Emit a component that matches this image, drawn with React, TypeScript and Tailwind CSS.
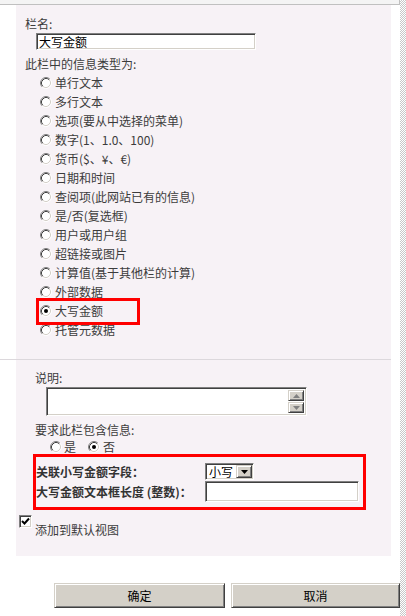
import React from "react";

const types = [
  "单行文本",
  "多行文本",
  "选项(要从中选择的菜单)",
  "数字(1、1.0、100)",
  "货币($、¥、€)",
  "日期和时间",
  "查阅项(此网站已有的信息)",
  "是/否(复选框)",
  "用户或用户组",
  "超链接或图片",
  "计算值(基于其他栏的计算)",
  "外部数据",
  "大写金额",
  "托管元数据",
];

const Radio = ({ checked = false }: { checked?: boolean }) => (
  <svg width="12" height="12" viewBox="0 0 12 12" className="shrink-0">
    <circle cx="6" cy="6" r="4.5" fill="#ffffff" />
    <path d="M2.11 9.89 A5.5 5.5 0 0 1 9.89 2.11" fill="none" stroke="#808080" strokeWidth="1" />
    <path d="M9.89 2.11 A5.5 5.5 0 0 1 2.11 9.89" fill="none" stroke="#ffffff" strokeWidth="1" />
    <path d="M2.82 9.18 A4.5 4.5 0 0 1 9.18 2.82" fill="none" stroke="#404040" strokeWidth="1" />
    <path d="M9.18 2.82 A4.5 4.5 0 0 1 2.82 9.18" fill="none" stroke="#d4d0c8" strokeWidth="1" />
    {checked && <circle cx="6" cy="6" r="2" fill="#000000" />}
  </svg>
);

const sunken =
  "bg-white border border-t-[#808080] border-l-[#808080] border-b-white border-r-white shadow-[inset_1px_1px_#404040,inset_-1px_-1px_#d4d0c8]";

const raised =
  "bg-[#d4d0c8] border border-t-[#d4d0c8] border-l-[#d4d0c8] border-b-[#404040] border-r-[#404040] shadow-[inset_1px_1px_#ffffff,inset_-1px_-1px_#808080]";

const Arrow = ({ up = false, color = "#000" }: { up?: boolean; color?: string }) => (
  <svg width="7" height="4" viewBox="0 0 7 4">
    <path d={up ? "M3.5 0 L7 4 L0 4 Z" : "M0 0 L7 0 L3.5 4 Z"} fill={color} />
  </svg>
);

export default function App() {
  return (
    <div className="flex w-[406px] h-[616px] bg-white text-[12px] text-[#3c3c3c] font-['Noto_Sans_CJK_SC',sans-serif] overflow-hidden">
      <div className="w-[400px] flex flex-col">
        <div className="h-[5px] bg-[#f4f4f4] border-b border-r border-[#c0c0c0]" />

        {/* 栏名与类型 */}
        <div className="flex">
          <div className="w-[16px]" />
          <div className="w-[375px] h-[354px] bg-[#f7f2f6] pt-[9px]">
            <div className="h-[19px] flex items-center pl-[9px]">栏名:</div>
            <div className={`ml-[20px] w-[220px] h-[17px] flex items-center pl-[2px] text-black ${sunken}`}>
              大写金额
            </div>
            <div className="mt-[4px] h-[19px] flex items-center pl-[9px]">此栏中的信息类型为:</div>
            {types.map((t, i) => (
              <div key={t} className="relative h-[19px] flex items-center pl-[24px] gap-[3px]">
                <Radio checked={i === 12} />
                <span>{t}</span>
                {i === 12 && (
                  <div className="absolute z-10 left-[20px] top-[-3px] w-[104px] h-[27px] border-[3px] border-[#ff0000]" />
                )}
              </div>
            ))}
          </div>
        </div>

        <div className="h-px w-[391px] bg-[#dcd8dc]" />

        {/* 说明与设置 */}
        <div className="flex">
          <div className="w-[16px]" />
          <div className="w-[375px] h-[196px] bg-[#f7f2f6] pt-[9px]">
            <div className="h-[18px] flex items-center pl-[19px]">说明:</div>
            <div className={`ml-[30px] w-[261px] h-[29px] flex justify-end p-[2px] ${sunken}`}>
              <div className="w-[16px] flex flex-col gap-px">
                <div className={`h-[12px] flex items-center justify-center ${raised}`}>
                  <Arrow up color="#808080" />
                </div>
                <div className={`h-[12px] flex items-center justify-center ${raised}`}>
                  <Arrow color="#808080" />
                </div>
              </div>
            </div>
            <div className="mt-[4px] h-[19px] flex items-center pl-[19px]">要求此栏包含信息:</div>
            <div className="h-[15px] flex items-center pl-[34px]">
              <Radio />
              <span className="ml-[2px]">是</span>
              <span className="ml-[12px]">
                <Radio checked />
              </span>
              <span className="ml-[3px]">否</span>
            </div>

            <div className="ml-[17px] w-[333px] h-[56px] border-[3px] border-[#ff0000] pt-[6px] font-bold text-[#333]">
              <div className="h-[17px] flex items-center">
                <span className="w-[169px]">关联小写金额字段：</span>
                <div className={`w-[49px] h-[17px] flex items-center justify-between pl-[3px] pr-px font-normal text-black ${sunken}`}>
                  <span>小写</span>
                  <div className={`w-[16px] h-[13px] flex items-center justify-center ${raised}`}>
                    <Arrow />
                  </div>
                </div>
              </div>
              <div className="mt-px h-[21px] flex items-center">
                <span className="w-[169px] whitespace-pre">大写金额文本框长度 (整数)：</span>
                <div className={`w-[154px] h-[21px] ${sunken}`} />
              </div>
            </div>

            <div className="mt-[5px] ml-[3px] flex items-start gap-[3px]">
              <div className={`w-[13px] h-[13px] flex items-center justify-center ${sunken}`}>
                <svg width="9" height="9" viewBox="0 0 9 9">
                  <path d="M1 4 L3.5 6.5 L8 1.5" fill="none" stroke="#000" strokeWidth="2" />
                </svg>
              </div>
              <span className="mt-[5px] leading-[19px]">添加到默认视图</span>
            </div>
          </div>
        </div>

        {/* 按钮 */}
        <div className="mt-[27px] flex pl-[54px] gap-[6px]">
          <button className={`w-[171px] h-[25px] text-black text-[12px] ${raised}`}>确定</button>
          <button className={`w-[169px] h-[25px] text-black text-[12px] ${raised}`}>取消</button>
        </div>
      </div>
      <div className="w-[6px] h-full bg-[repeating-conic-gradient(#c8c8c8_0%_25%,#ffffff_0%_50%)] bg-[length:2px_2px]" />
    </div>
  );
}
